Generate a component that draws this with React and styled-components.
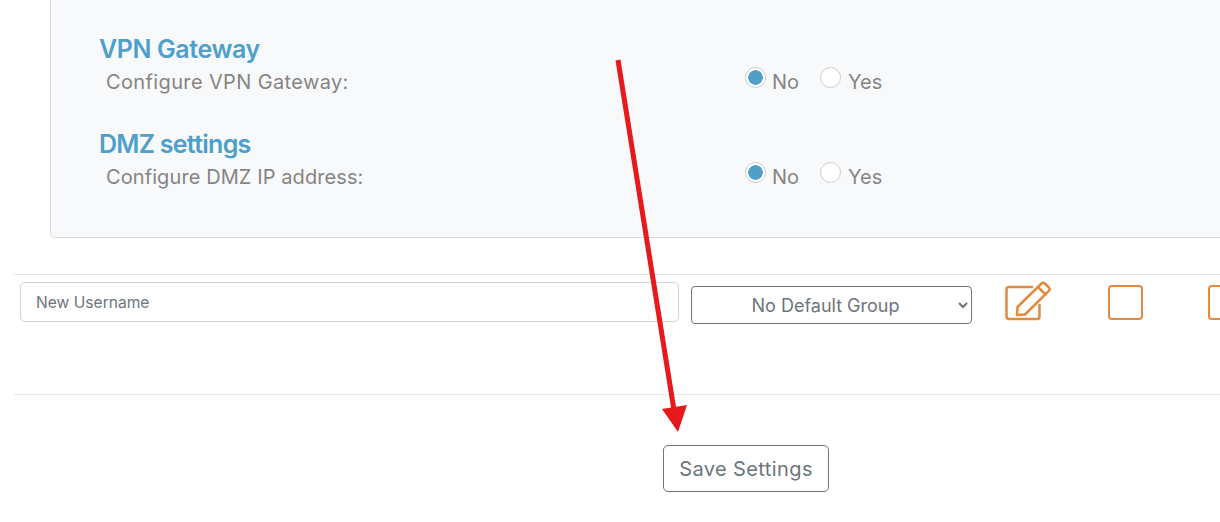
import React from "react";
import styled, { createGlobalStyle } from "styled-components";

const Global = createGlobalStyle`
  html, body { margin: 0; padding: 0; background: #fff; }
  body { font-family: Inter, "Open Sans", sans-serif; }
`;

const Page = styled.div`
  position: relative;
  width: 1220px;
  height: 522px;
  overflow: hidden;
  padding-left: 14px;
  box-sizing: border-box;
`;

const Panel = styled.section`
  box-sizing: border-box;
  height: 238px;
  margin: 0 -40px 36px 36px;
  padding: 34px 48px 0;
  background: #f8f9fb;
  border: 1px solid #d5d7da;
  border-top: none;
  border-radius: 0 0 0 5px;
`;

const Group = styled.div`
  height: 95px;
`;

const Heading = styled.h3`
  margin: 0 0 5px;
  font-size: 25px;
  line-height: 30px;
  font-weight: 600;
  letter-spacing: ${(p) => p.$spacing}px;
  color: #4e9fca;
`;

const Row = styled.div`
  display: flex;
  align-items: flex-start;
  padding-left: 7px;
`;

const Label = styled.span`
  width: 639px;
  font-size: 20px;
  line-height: 26px;
  letter-spacing: ${(p) => p.$spacing}px;
  color: #868482;
`;

const Choice = styled.label`
  display: flex;
  align-items: flex-start;
  width: 75px;
  font-size: 20px;
  line-height: 26px;
  color: #868482;
`;

const Radio = styled.input.attrs({ type: "radio" })`
  appearance: none;
  flex: none;
  box-sizing: border-box;
  width: 21px;
  height: 21px;
  margin: -2px 7px 0 0;
  background: #fff;
  border: 1px solid #cccccc;
  border-radius: 50%;
  &:checked {
    margin-right: 6px;
    background: radial-gradient(circle, #4e9fca 0 7px, #fff 7.5px);
  }
`;

const UserRow = styled.div`
  display: flex;
  align-items: flex-start;
  height: 121px;
  box-sizing: border-box;
  margin-right: -40px;
  padding: 7px 0 0 6px;
  border-top: 1px solid #e1e2e6;
  border-bottom: 1px solid #e6e6e8;
`;

const NameInput = styled.input`
  box-sizing: border-box;
  width: 659px;
  height: 40px;
  padding: 0 15px;
  font: 400 15.6px Inter, sans-serif;
  color: #6c757d;
  background: #fff;
  border: 1px solid #ced4da;
  border-radius: 5px;
  &::placeholder { color: #6c757d; opacity: 1; }
`;

const GroupSelect = styled.select`
  box-sizing: border-box;
  width: 281px;
  height: 38px;
  margin: 4px 0 0 12px;
  font: 400 18px Inter, sans-serif;
  text-align: center;
  color: #6c757d;
  background: #fff;
  border: 1px solid #6c757d;
  border-radius: 4px;
`;

const EditIcon = styled.svg`
  flex: none;
  width: 46px;
  height: 41px;
  margin: -1px 0 0 33px;
  fill: none;
  stroke: #e48a3f;
  stroke-width: 2.5;
  stroke-linejoin: round;
  stroke-linecap: round;
`;

const Check = styled.span`
  flex: none;
  box-sizing: border-box;
  width: 35px;
  height: 35px;
  margin: 3px 0 0 ${(p) => p.$gap}px;
  border: 2px solid #e48a3f;
  border-radius: 4px;
`;

const Footer = styled.div`
  display: flex;
  padding: 50px 0 0 649px;
`;

const SaveButton = styled.button`
  box-sizing: border-box;
  width: 166px;
  height: 47px;
  font: 400 20px Inter, sans-serif;
  letter-spacing: 0.4px;
  color: #6c757d;
  background: #fff;
  border: 1px solid #6c757d;
  border-radius: 5px;
`;

const Arrow = styled.svg`
  position: absolute;
  left: 0;
  top: 0;
  pointer-events: none;
`;

const sections = [
  { title: "VPN Gateway", label: "Configure VPN Gateway:", name: "vpn", headSpacing: -0.4, labelSpacing: 0.37 },
  { title: "DMZ settings", label: "Configure DMZ IP address:", name: "dmz", headSpacing: -0.73, labelSpacing: 0.09 },
];

export default function App() {
  return (
    <Page>
      <Global />
      <Panel>
        {sections.map((s) => (
          <Group key={s.name}>
            <Heading $spacing={s.headSpacing}>{s.title}</Heading>
            <Row>
              <Label $spacing={s.labelSpacing}>{s.label}</Label>
              <Choice><Radio name={s.name} defaultChecked />No</Choice>
              <Choice><Radio name={s.name} />Yes</Choice>
            </Row>
          </Group>
        ))}
      </Panel>
      <UserRow>
        <NameInput placeholder="New Username" />
        <GroupSelect defaultValue="none">
          <option value="none">No Default Group</option>
        </GroupSelect>
        <EditIcon viewBox="0 0 46 41">
          <path d="M27 6H4a2.5 2.5 0 0 0-2.5 2.5v27A2.5 2.5 0 0 0 4 38h28a2.5 2.5 0 0 0 2.5-2.5V24" />
          <path d="M12.5 26 36.5 2.5a2.5 2.5 0 0 1 3.4 0l4 4a2.5 2.5 0 0 1 0 3.4L20 33.5l-8 .5z" />
          <path d="M33 6l7.5 7.5" />
        </EditIcon>
        <Check $gap={57} />
        <Check $gap={65} />
      </UserRow>
      <Footer>
        <SaveButton>Save Settings</SaveButton>
      </Footer>
      <Arrow width="1220" height="522" viewBox="0 0 1220 522">
        <line x1="618" y1="60" x2="674" y2="410" stroke="#e8191c" strokeWidth="5" />
        <polygon points="662,409 687,405 678,432" fill="#e8191c" />
      </Arrow>
    </Page>
  );
}
